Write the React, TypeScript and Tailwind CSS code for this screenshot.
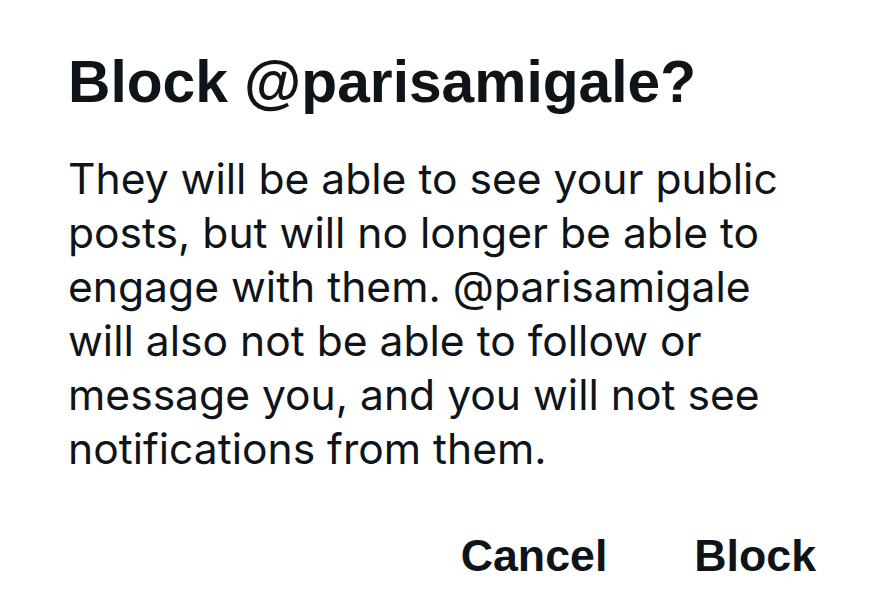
import React from 'react';

const bodyLines = [
  'They will be able to see your public',
  'posts, but will no longer be able to',
  'engage with them. @parisamigale',
  'will also not be able to follow or',
  'message you, and you will not see',
  'notifications from them.',
];

export default function App() {
  return (
    <div className="w-[875px] h-[614px] bg-white text-[#0f1419] overflow-hidden">
      <div className="flex flex-col pl-[68px] pr-[59px] pt-[46px]">
        {/* Title */}
        <h1 className="font-['Liberation_Sans',Arial,sans-serif] font-bold text-[58.7px] leading-[72px]">
          Block @parisamigale?
        </h1>

        {/* Body */}
        <p className="mt-[34px] font-['Inter',sans-serif] text-[42.6px] leading-[54px]">
          {bodyLines.map((line, i) => (
            <span key={i} className="block whitespace-nowrap">{line}</span>
          ))}
        </p>

        {/* Actions */}
        <div className="mt-[52px] flex justify-end gap-[87px]">
          <button className="font-['Liberation_Sans',Arial,sans-serif] font-bold text-[44.7px] leading-[56px]">
            Cancel
          </button>
          <button className="font-['Liberation_Sans',Arial,sans-serif] font-bold text-[44.7px] leading-[56px]">
            Block
          </button>
        </div>
      </div>
    </div>
  );
}
